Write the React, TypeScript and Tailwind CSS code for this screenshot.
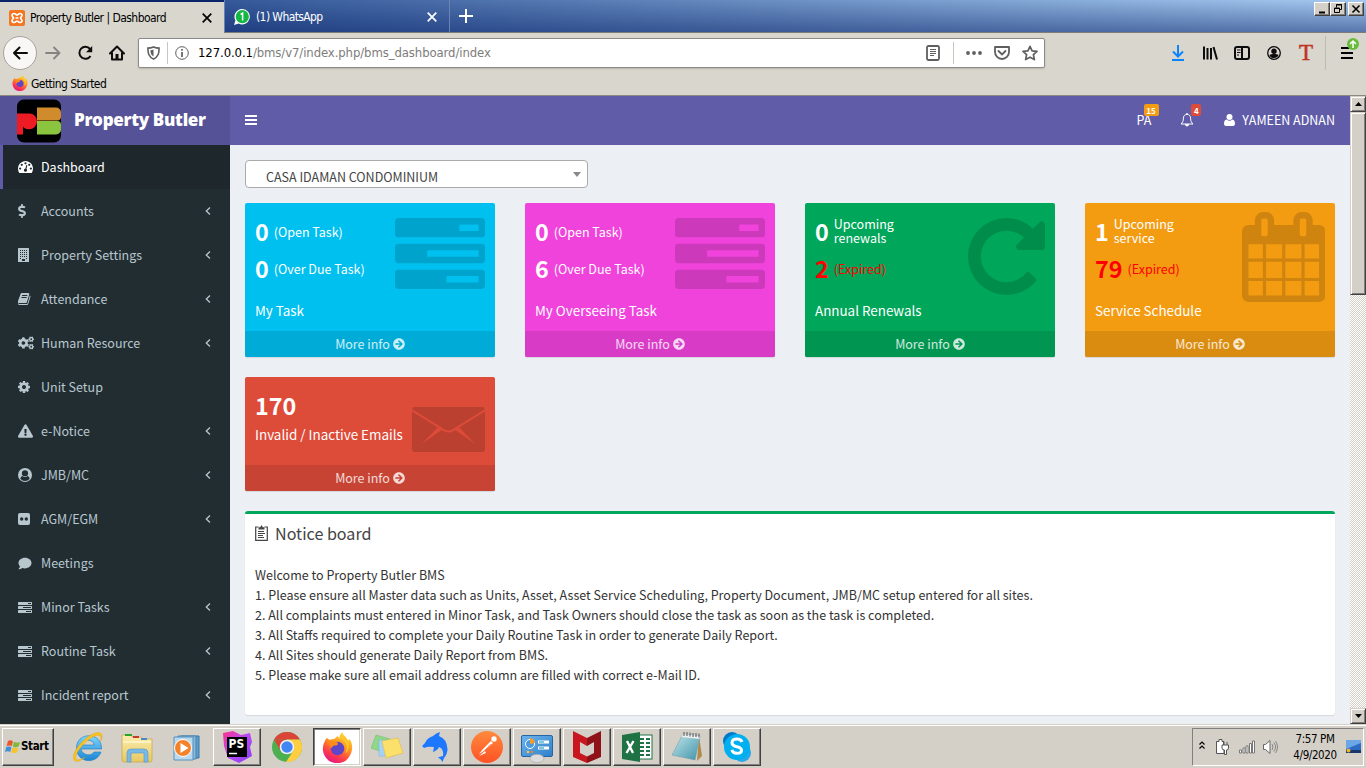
import type { ReactNode } from 'react';
import { FaCogs, FaComment, FaExclamationTriangle, FaArrowCircleRight, FaDollarSign } from 'react-icons/fa';

const TASKS =
  'M1024 1408h640v-128h-640v128zM640 896h1024v-128h-1024v128zM1280 384h384v-128h-384v128zM1792 1216v256q0 26-19 45t-45 19h-1664q-26 0-45-19t-19-45v-256q0-26 19-45t45-19h1664q26 0 45 19t19 45zM1792 704v256q0 26-19 45t-45 19h-1664q-26 0-45-19t-19-45v-256q0-26 19-45t45-19h1664q26 0 45 19t19 45zM1792 192v256q0 26-19 45t-45 19h-1664q-26 0-45-19t-19-45v-256q0-26 19-45t45-19h1664q26 0 45 19t19 45z';
const REPEAT =
  'M1664 256v448q0 26-19 45t-45 19h-448q-42 0-59-40-17-39 14-69l138-138q-148-137-349-137-104 0-198.5 40.5t-163.5 109.5-109.5 163.5-40.5 198.5 40.5 198.5 109.5 163.5 163.5 109.5 198.5 40.5q119 0 225-52t179-147q7-10 23-12 15 0 25 9l137 138q9 8 9.5 20.5t-7.5 22.5q-109 132-264 204.5t-327 72.5q-156 0-298-61t-245-164-164-245-61-298 61-298 164-245 245-164 298-61q147 0 284.5 55.5t244.5 156.5l130-129q29-31 70-14 39 17 39 59z';
const CALENDAR =
  'M192 1664h288v-288h-288v288zm352 0h320v-288h-320v288zm-352-352h288v-320h-288v320zm352 0h320v-320h-320v320zm-352-384h288v-288h-288v288zm736 736h320v-288h-320v288zm-384-736h320v-288h-320v288zm768 736h288v-288h-288v288zm-384-352h320v-320h-320v320zm-352-864v-288q0-13-9.5-22.5t-22.5-9.5h-64q-13 0-22.5 9.5t-9.5 22.5v288q0 13 9.5 22.5t22.5 9.5h64q13 0 22.5-9.5t9.5-22.5zm736 864h288v-320h-288v320zm-384-384h320v-288h-320v288zm384 0h288v-288h-288v288zm32-480v-288q0-13-9.5-22.5t-22.5-9.5h-64q-13 0-22.5 9.5t-9.5 22.5v288q0 13 9.5 22.5t22.5 9.5h64q13 0 22.5-9.5t9.5-22.5zm384-64v1280q0 52-38 90t-90 38h-1408q-52 0-90-38t-38-90v-1280q0-52 38-90t90-38h128v-96q0-66 47-113t113-47h64q66 0 113 47t47 113v96h384v-96q0-66 47-113t113-47h64q66 0 113 47t47 113v96h128q52 0 90 38t38 90z';
const BOOK =
  'M1639 478q40 57 18 129l-275 906q-19 64-76.5 107.5t-122.5 43.5h-923q-77 0-148.5-53.5t-99.5-131.5q-24-67-2-127 0-4 3-27t4-37q1-8-3-21.5t-3-19.5q2-11 8-21t16.5-23.5 16.5-23.5q23-38 45-91.5t30-91.5q3-10 .5-30t-.5-28q3-11 17-28t17-23q21-36 42-92t25-90q1-9-2.5-32t.5-28q4-13 22-30.5t22-22.5q19-26 42.5-84.5t27.5-96.5q1-8-3-25.5t-2-26.5q2-8 9-18t18-23 17-21q8-12 16.5-30.5t15-35 16-36 19.5-32 26.5-23.5 36-11.5 47.5 5.5l-1 3q38-9 51-9h761q74 0 114 56t18 130l-274 906q-36 119-71.5 153.5t-128.5 34.5h-869q-27 0-38 15-11 16-1 43 24 70 144 70h923q29 0 56-15.5t35-41.5l300-987q7-22 5-57 38 15 59 43zm-1064 2q-4 13 2 22.5t20 9.5h608q13 0 25.5-9.5t16.5-22.5l21-64q4-13-2-22.5t-20-9.5h-608q-13 0-25.5 9.5t-16.5 22.5zm-83 256q-4 13 2 22.5t20 9.5h608q13 0 25.5-9.5t16.5-22.5l21-64q4-13-2-22.5t-20-9.5h-608q-13 0-25.5 9.5t-16.5 22.5z';
const COG =
  'M1152 896q0-106-75-181t-181-75-181 75-75 181 75 181 181 75 181-75 75-181zm512-109v222q0 12-8 23t-20 13l-185 28q-19 54-39 91 35 50 107 138 10 12 10 25t-9 23q-27 37-99 108t-94 71q-12 0-26-9l-138-108q-44 23-91 38-16 136-29 186-7 28-36 28h-222q-14 0-24.5-8.5t-11.5-21.5l-28-184q-49-16-90-37l-141 107q-10 9-25 9-14 0-25-11-126-114-165-168-7-10-7-23 0-12 8-23 15-21 51-66.5t54-70.5q-27-50-41-99l-183-27q-13-2-21-12.5t-8-23.5v-222q0-12 8-23t19-13l186-28q14-46 39-92-40-57-107-138-10-12-10-24 0-10 9-23 26-36 98.5-107.5t94.5-71.5q13 0 26 10l138 107q44-23 91-38 16-136 29-186 7-28 36-28h222q14 0 24.5 8.5t11.5 21.5l28 184q49 16 90 37l142-107q9-9 24-9 13 0 25 10 129 119 165 170 7 8 7 22 0 12-8 23-15 21-51 66.5t-54 70.5q26 50 41 98l183 28q13 2 21 12.5t8 23.5z';
const TACHO =
  'M384 1152q0-53-37.5-90.5t-90.5-37.5-90.5 37.5-37.5 90.5 37.5 90.5 90.5 37.5 90.5-37.5 37.5-90.5zm192-448q0-53-37.5-90.5t-90.5-37.5-90.5 37.5-37.5 90.5 37.5 90.5 90.5 37.5 90.5-37.5 37.5-90.5zm428 481l101-382q6-26-7.5-48.5t-38.5-29.5-48 6.5-30 39.5l-101 382q-60 5-107 43.5t-63 98.5q-20 77 20 146t117 89 146-20 89-117q16-60-6-117t-72-91zm660-33q0-53-37.5-90.5t-90.5-37.5-90.5 37.5-37.5 90.5 37.5 90.5 90.5 37.5 90.5-37.5 37.5-90.5zm-640-640q0-53-37.5-90.5t-90.5-37.5-90.5 37.5-37.5 90.5 37.5 90.5 90.5 37.5 90.5-37.5 37.5-90.5zm448 192q0-53-37.5-90.5t-90.5-37.5-90.5 37.5-37.5 90.5 37.5 90.5 90.5 37.5 90.5-37.5 37.5-90.5zm320 448q0 261-141 483-19 29-54 29h-1402q-35 0-54-29-141-221-141-483 0-182 71-348t191-286 286-191 348-71 348 71 286 191 191 286 71 348z';

const Tasks = ({ className }: { className: string }) => (
  <svg viewBox="0 128 1792 1408" className={className} fill="currentColor" preserveAspectRatio="none"><path d={TASKS} /></svg>
);

const BuildingIcon = () => (
  <svg className="w-[11px] h-[14px]" viewBox="0 0 11 14">
    <rect width="11" height="14" rx=".5" fill="currentColor" />
    {[2, 4, 6, 8, 10].map((y) => [2, 4, 6, 8].map((x) => (y === 10 && (x === 4 || x === 6) ? null : <rect key={`${x}-${y}`} x={x} y={y} width="1" height="1" fill="#222d32" />)))}
    <rect x="4" y="11" width="3" height="2" fill="#222d32" />
  </svg>
);

const UserCircle = () => (
  <svg className="w-[14px] h-[14px]" viewBox="0 0 14 14">
    <circle cx="7" cy="7" r="7" fill="currentColor" />
    <path d="M2.300 10.800C2.600 9.200 3.500 8 4.600 7.900a3.400 3.400 0 0 0 4.800 0c1.100.1 2 1.300 2.300 2.900A6 6 0 0 1 7 13a6 6 0 0 1-4.700-2.200z" fill="#222d32" />
    <circle cx="7" cy="5.400" r="3.100" fill="#222d32" />
    <path d="M4.300 5.800a2.700 2.700 0 0 0 5.400 0c0 2-1.200 3.200-2.700 3.200S4.300 7.800 4.300 5.800z" fill="currentColor" />
  </svg>
);

const FlickrIcon = () => (
  <svg className="w-3 h-3" viewBox="0 0 12 12">
    <rect width="12" height="12" rx="2" fill="currentColor" />
    <circle cx="3.700" cy="6" r="1.700" fill="#222d32" />
    <circle cx="8.300" cy="6" r="1.700" fill="#222d32" />
  </svg>
);

const Menu: { label: string; icon: ReactNode; arrow?: boolean }[] = [
  { label: 'Accounts', icon: <FaDollarSign className="w-[8px] h-[14px]" />, arrow: true },
  { label: 'Property Settings', icon: <BuildingIcon />, arrow: true },
  { label: 'Attendance', icon: <svg className="w-[13px] h-[12px]" viewBox="64 128 1664 1536" fill="currentColor"><path d={BOOK} /></svg>, arrow: true },
  { label: 'Human Resource', icon: <FaCogs className="w-[16px] h-[14px]" />, arrow: true },
  { label: 'Unit Setup', icon: <svg className="w-[12px] h-[12px]" viewBox="128 128 1536 1536" fill="currentColor"><path d={COG} /></svg> },
  { label: 'e-Notice', icon: <FaExclamationTriangle className="w-[15px] h-[14px]" />, arrow: true },
  { label: 'JMB/MC', icon: <UserCircle />, arrow: true },
  { label: 'AGM/EGM', icon: <FlickrIcon />, arrow: true },
  { label: 'Meetings', icon: <FaComment className="w-[14px] h-[13px]" /> },
  { label: 'Minor Tasks', icon: <Tasks className="w-[14px] h-[11px]" />, arrow: true },
  { label: 'Routine Task', icon: <Tasks className="w-[14px] h-[11px]" />, arrow: true },
  { label: 'Incident report', icon: <Tasks className="w-[14px] h-[11px]" />, arrow: true },
];

const XIcon = ({ className }: { className: string }) => (
  <svg className={className} viewBox="0 0 10 10" fill="none" stroke="currentColor" strokeWidth="1.700"><path d="M.7.7l8.600 8.600M9.300.7L.7 9.300" /></svg>
);

function TabStrip() {
  return (
    <div className="h-[33px] flex border-b border-[#7e7c78] bg-[linear-gradient(to_bottom,rgba(10,36,106,0),rgba(10,36,106,0.5)),linear-gradient(to_right,#1f4388,#a6caf0)]">
      <div className="w-[224px] h-[33px] border-t-2 border-[#0a246a] bg-[#d9d6ce] flex items-center pl-[9px] shrink-0">
        <svg className="w-4 h-4" viewBox="0 0 16 16"><rect width="16" height="16" rx="2" fill="#f37623" /><path d="M5 3.500c-2 0-2.600 1.800-1.500 3l1 1.500-1 1.500c-1.100 1.200-.5 3 1.500 3 1.500 0 2-1.500 3-1.500s1.500 1.500 3 1.500c2 0 2.600-1.800 1.500-3l-1-1.500 1-1.500c1.100-1.200.5-3-1.500-3-1.500 0-2 1.500-3 1.500s-1.500-1.500-3-1.500zM6.500 8h3" fill="none" stroke="#fff" strokeWidth="1.700" /></svg>
        <span className="ml-[5px] w-[162px] text-[12px] tracking-[-0.54px] text-black whitespace-nowrap">Property Butler | Dashboard</span>
        <XIcon className="w-[10px] h-[10px] ml-[10px] text-black" />
      </div>
      <div className="w-[226px] h-[32px] border-l border-r border-[#6a83b4] flex items-center pl-[9px] pt-[2px] text-white shrink-0">
        <svg className="w-4 h-4" viewBox="0 0 16 16"><path d="M8.300 0a7.700 7.700 0 1 1-3.600 14.600L0 16l1.400-4.600A7.700 7.700 0 0 1 8.300 0z" fill="#fff" /><circle cx="8.300" cy="7.700" r="6.600" fill="#12b843" /><path d="M6.600 5.500l2-1.300v7.200" fill="none" stroke="#fff" strokeWidth="1.500" /></svg>
        <span className="ml-[6px] w-[160px] text-[12px] tracking-[-0.6px] whitespace-nowrap">(1) WhatsApp</span>
        <XIcon className="w-[10px] h-[10px] ml-[11px]" />
      </div>
      <svg className="w-[14px] h-[14px] mt-[9px] ml-[9px]" viewBox="0 0 14 14" stroke="#fff" strokeWidth="2"><path d="M7 0v14M0 7h14" /></svg>
      <div className="ml-auto mr-[2px] mt-[2px] flex h-[14px]">
        <WinBtn><path d="M4 9.500h6" strokeWidth="2" /></WinBtn>
        <WinBtn><path d="M5.500 4.500v-3h5v5H9M5 2h6M3.500 5h5v4.500h-5zM3 5.500h6" fill="none" /></WinBtn>
        <div className="w-[2px]" />
        <WinBtn><path d="M3.500 2.500l7 7M10.500 2.500l-7 7" strokeWidth="1.600" /></WinBtn>
      </div>
    </div>
  );
}

const WinBtn = ({ children }: { children: ReactNode }) => (
  <div className="w-4 h-[14px] bg-[#d4d0c8] border border-t-white border-l-white border-r-[#404040] border-b-[#404040] shadow-[inset_-1px_-1px_0_#808080]">
    <svg className="w-[14px] h-3" viewBox="0 0 14 12" stroke="#000">{children}</svg>
  </div>
);

function Toolbar() {
  return (
    <div className="h-[63px] bg-[#d9d6ce] border-b border-[#8b8880]">
      <div className="h-[40px] flex items-center">
        <div className="ml-[3px] w-[34px] h-[34px] rounded-full bg-[#f8f7f5] border border-[#a5a29c] flex items-center justify-center shrink-0">
          <svg className="w-4 h-4" viewBox="0 0 16 16" fill="none" stroke="#0c0c0d" strokeWidth="2" strokeLinecap="round" strokeLinejoin="round"><path d="M15 8H2M7.500 2.500L2 8l5.500 5.500" /></svg>
        </div>
        <svg className="w-4 h-4 ml-[8px] shrink-0" viewBox="0 0 16 16" fill="none" stroke="#868480" strokeWidth="1.800" strokeLinecap="round" strokeLinejoin="round"><path d="M1 8h13M9 2.500L14.500 8 9 13.500" /></svg>
        <svg className="w-4 h-4 ml-4 shrink-0" viewBox="0 0 16 16" fill="none" stroke="#0c0c0d" strokeWidth="2"><path d="M13.500 11A6 6 0 1 1 13 4" /><path d="M9 7.200h6.200V1z" fill="#0c0c0d" stroke="none" /></svg>
        <svg className="w-4 h-4 ml-4 shrink-0" viewBox="0 0 16 16" fill="none" stroke="#0c0c0d" strokeWidth="2"><path d="M1 8.500L8 1.500l7 7M3 8v6.500h10V8" strokeLinejoin="round" strokeLinecap="round" /><path d="M6.500 14.500V9h3v5.500z" fill="#0c0c0d" stroke="none" /></svg>
        <div className="ml-[13px] w-[907px] h-[30px] bg-white border border-[#8c8a86] rounded-[2px] flex items-center shrink-0 shadow-[0_1px_2px_rgba(0,0,0,0.15)]">
          <svg className="w-[13px] h-[14px] ml-[8px]" viewBox="0 0 13 14"><path d="M6.500.9c2 .9 3.500 1.200 5.600 1.200 0 5-.6 8.500-5.600 11-5-2.500-5.600-6-5.600-11C3 2.100 4.500 1.800 6.500.9z" fill="none" stroke="#5f5f60" strokeWidth="1.600" /><path d="M6.500 3.500v7C4 9 3.500 7 3.400 4.200c1.100 0 2.100-.3 3.100-.7z" fill="#5f5f60" /></svg>
          <div className="w-px h-[22px] bg-[#c9c6be] ml-[7px]" />
          <svg className="w-[14px] h-[14px] ml-[7px]" viewBox="0 0 14 14" fill="none" stroke="#5f5f60"><circle cx="7" cy="7" r="6.300" /><path d="M7 6v5M7 3v1.700" strokeWidth="1.700" /></svg>
          <span className="ml-[9px] text-[13px] text-[#7d7c7a] whitespace-nowrap tracking-[-0.1px]"><span className="text-black">127.0.0.1</span>/bms/v7/index.php/bms_dashboard/index</span>
          <svg className="w-[14px] h-4 ml-auto" viewBox="0 0 14 16" fill="none" stroke="#5f5f60"><rect x="1" y="1" width="12" height="14" rx="1.500" strokeWidth="1.800" /><path d="M4 4.500h6M4 6.500h6M4 8.500h6M4 10.500h4" /></svg>
          <div className="w-px h-[22px] bg-[#c9c6be] ml-[13px]" />
          <svg className="w-4 h-4 ml-[12px]" viewBox="0 0 16 16" fill="#5f5f60"><circle cx="2" cy="8" r="1.900" /><circle cx="8" cy="8" r="1.900" /><circle cx="14" cy="8" r="1.900" /></svg>
          <svg className="w-4 h-4 ml-3" viewBox="0 0 16 16" fill="none" stroke="#5f5f60" strokeWidth="1.800"><path d="M1 2h14v5a7 7 0 0 1-14 0z" strokeLinejoin="round" /><path d="M4.500 6L8 9.500 11.500 6" strokeLinecap="round" /></svg>
          <svg className="w-4 h-4 ml-3 mr-[6px]" viewBox="0 0 16 16" fill="none" stroke="#5f5f60" strokeWidth="1.700"><path d="M8 1.300l2.100 4.500 4.900.6-3.600 3.300 1 4.900L8 12.200l-4.400 2.400 1-4.900L1 6.400l4.900-.6z" strokeLinejoin="round" /></svg>
        </div>
        <svg className="w-[14px] h-4 ml-[126px] shrink-0" viewBox="0 0 14 16" fill="none" stroke="#0a84ff" strokeWidth="2"><path d="M7 0v11M2 6.500L7 11.500l5-5M1 15h12" /></svg>
        <svg className="w-4 h-4 ml-[17px] shrink-0" viewBox="0 0 16 16" stroke="#0c0c0d" strokeWidth="2"><path d="M2 1.500v13M5.500 3v11.500M9 3v11.500M11.500 2l3.500 12.500" /></svg>
        <svg className="w-4 h-4 ml-4 shrink-0" viewBox="0 0 16 16" fill="none" stroke="#0c0c0d" strokeWidth="2"><rect x="1" y="2" width="14" height="12" rx="2" /><path d="M8 2v12" /><path d="M3 5h3.500M3 7.500h3.500M3 10h2" strokeWidth="1" /></svg>
        <svg className="w-[14px] h-[14px] ml-[17px] shrink-0" viewBox="0 0 14 14"><circle cx="7" cy="7" r="6.300" fill="none" stroke="#0c0c0d" strokeWidth="1.300" /><circle cx="7" cy="5.200" r="2.700" fill="#0c0c0d" /><path d="M2.500 9C4 7.800 10 7.800 11.500 9 11 11 9 12 7 12S3 11 2.500 9z" fill="#0c0c0d" /></svg>
        <span className="ml-[17px] w-[16px] text-center font-['Liberation_Serif',serif] text-[23px] leading-[20px] [-webkit-text-stroke:0.5px_#c0321f] text-[#c0321f]">T</span>
        <div className="w-px h-[34px] bg-[#bebbb3] ml-[11px]" />
        <div className="relative ml-[15px] w-[12px] h-[12px] flex flex-col justify-between">
          <div className="h-[2px] bg-black" /><div className="h-[2px] bg-black" /><div className="h-[2px] bg-black" />
          <svg className="absolute left-[6px] -top-[9px] w-3 h-3" viewBox="0 0 12 12"><circle cx="6" cy="6" r="6" fill="#67bd3b" /><path d="M6 10V3M3 6l3-3 3 3" fill="none" stroke="#fff" strokeWidth="1.500" /></svg>
        </div>
      </div>
      <div className="h-[22px] flex items-center pl-3">
        <FirefoxLogo className="w-[16px] h-[16px] -mt-[2px]" />
        <span className="ml-[3px] text-[12px] text-black tracking-[-0.55px]">Getting Started</span>
      </div>
    </div>
  );
}

const FirefoxLogo = ({ className }: { className: string }) => (
  <svg className={className} viewBox="0 0 32 32">
    <defs>
      <linearGradient id="ffx" x1=".8" y1="0" x2=".3" y2="1"><stop offset="0" stopColor="#ffe43d" /><stop offset=".4" stopColor="#ff9a1f" /><stop offset=".75" stopColor="#ff3b4b" /><stop offset="1" stopColor="#e31587" /></linearGradient>
    </defs>
    <path d="M5 6c1 1 2 2 3 2l5-1 3-3c1 1 2 3 2 3 0-3 1-5 3-7 1 4 4 5 6 9 1-1 1-2 1-2 4 4 4 12 1 17a14.800 14.800 0 0 1-26.500 0C-.5 18 1 11 5 6z" fill="url(#ffx)" />
    <circle cx="16" cy="17" r="7" fill="#5f45c8" />
    <path d="M5 8c3 2 6 1 9 2 4 1 3 4-1 4-2 0-2 2-4 3 0-4-3-5-4-9z" fill="#ff8a16" />
    <path d="M17 6c7 1 11 9 7 16 5-3 5-13-1-18z" fill="#ffc927" />
  </svg>
);

const BellOutline = () => (
  <svg className="w-[14px] h-[14px]" viewBox="0 0 14 14" fill="none" stroke="#fff">
    <path d="M7 1.400C4.600 1.400 3.400 3.200 3.400 5.200c0 3-.9 4.400-2.400 5.800h12c-1.500-1.400-2.400-2.800-2.400-5.800 0-2-1.200-3.800-3.600-3.800z" strokeLinejoin="round" />
    <path d="M7 0v1.500" strokeWidth="1.400" />
    <path d="M5.500 11.500a1.500 1.500 0 0 0 3 0z" fill="#fff" />
  </svg>
);

function Header() {
  return (
    <div className="h-[49px] flex bg-[#605ca8] text-white">
      <div className="w-[230px] bg-[#565297] flex items-center pl-[17px]">
        <svg className="w-[44px] h-[44px]" viewBox="0 0 44 44">
          <rect y=".5" width="44" height="43" rx="7" fill="#000" />
          <path d="M20 8.500h19a5 5 0 0 1 5 5v4a4 4 0 0 1-4 4H20z" fill="#cf8b2c" />
          <path d="M20 22h20a4 4 0 0 1 4 4v4.500a5 5 0 0 1-5 5H20z" fill="#8bc540" />
          <path d="M0 14.500h12.500a7.500 7.500 0 0 1 7.500 7.500v.5a7.800 7.800 0 0 1-7.800 7.800Q8 30.500 6 27.500v8H0z" fill="#ed1c24" />
        </svg>
        <span className="ml-[13px] -mt-[1px] font-['Open_Sans',sans-serif] font-extrabold text-[17px] leading-[24px] tracking-[-0.3px] whitespace-nowrap">Property Butler</span>
      </div>
      <div className="flex-1 flex items-center pl-[15px] pr-[15px]">
        <div className="w-[12px] h-[10px] flex flex-col justify-between -mt-[1px]"><i className="h-[2px] bg-white" /><i className="h-[2px] bg-white" /><i className="h-[2px] bg-white" /></div>
        <div className="ml-auto relative -mt-[2px] text-[12.500px] leading-5">
          PA
          <span className="absolute left-[7px] -top-[6px] h-[12px] w-[15px] rounded-[2px] bg-[#f39c12] text-[8px] leading-[13px] font-bold text-center">15</span>
        </div>
        <div className="relative ml-[29px] w-[14px] mr-[30px] -mt-[1px]">
          <BellOutline />
          <span className="absolute left-[11px] -top-[9px] h-[12px] w-[10px] rounded-[2px] bg-[#dd4b39] text-[8px] leading-[13px] font-bold text-center">4</span>
        </div>
        <svg className="w-[11px] h-[12px] -mt-[1px]" viewBox="0 0 11 12" fill="#fff"><circle cx="5.500" cy="3" r="3" /><path d="M2.700 5.500a4 4 0 0 0 5.600 0C10.500 5.800 11 8 11 9.800c0 1.300-.8 2.200-2 2.200H2c-1.200 0-2-.9-2-2.200C0 8 .5 5.800 2.700 5.500z" /></svg>
        <span className="ml-[7px] -mt-[2px] text-[12.500px] leading-5 whitespace-nowrap">YAMEEN ADNAN</span>
      </div>
    </div>
  );
}

function Sidebar() {
  return (
    <div className="w-[230px] bg-[#222d32] text-[#b8c7ce] text-[12.500px] leading-5 overflow-hidden">
      <div className="h-[44px] bg-[#1e282c] border-l-[3px] border-[#605ca8] text-white flex items-center pl-[15px]">
        <div className="w-[23px]"><svg className="w-[15px] h-[12px]" viewBox="0 256 1792 1408" fill="currentColor"><path d={TACHO} /></svg></div>Dashboard
      </div>
      {Menu.map((m) => (
        <div key={m.label} className="h-[44px] flex items-center pl-[18px] pr-[19px]">
          <div className="w-[23px]">{m.icon}</div>
          <span>{m.label}</span>
          {m.arrow && <svg className="ml-auto w-[6px] h-[8px]" viewBox="0 0 6 8" fill="none" stroke="currentColor" strokeWidth="1.300"><path d="M5 .6L1.300 4 5 7.400" /></svg>}
        </div>
      ))}
    </div>
  );
}

function MoreInfo({ className }: { className: string }) {
  return (
    <div className={`h-[26px] flex items-center justify-center gap-[3px] text-white/80 text-[12.500px] leading-5 ${className}`}>
      More info <FaArrowCircleRight className="w-3 h-3" />
    </div>
  );
}

interface CardProps { bg: string; foot: string; a: string; aText: ReactNode; b: string; bText: string; red?: boolean; label: string; icon: ReactNode }

function Card({ bg, foot, a, aText, b, bText, red, label, icon }: CardProps) {
  return (
    <div className={`relative h-[154px] rounded-[2px] overflow-hidden text-white shadow-[0_1px_1px_rgba(0,0,0,0.1)] ${bg}`}>
      {icon}
      <div className="relative h-[128px] pl-[10px] pt-[10px]">
        <div className="h-[37px] flex items-center gap-[5px] text-[12.500px]">
          <b className="text-[23.300px] leading-[37px]">{a}</b>{aText}
        </div>
        <div className={`h-[37px] flex items-center gap-[5px] text-[12.500px] ${red ? 'text-[#ff0000]' : ''}`}>
          <b className="text-[23.300px] leading-[37px]">{b}</b><span className="pt-[2px]">{bText}</span>
        </div>
        <div className="mt-[13px] text-[13.400px] leading-5">{label}</div>
      </div>
      <MoreInfo className={foot} />
    </div>
  );
}

const OpenTask = <span className="pt-[1px] leading-[14px]">(Open Task)</span>;
const upcoming = (what: string) => <span className="-mt-[2px] leading-[14px]">Upcoming<br />{what}</span>;

const NOTICES = [
  'Welcome to Property Butler BMS',
  '1. Please ensure all Master data such as Units, Asset, Asset Service Scheduling, Property Document, JMB/MC setup entered for all sites.',
  '2. All complaints must entered in Minor Task, and Task Owners should close the task as soon as the task is completed.',
  '3. All Staffs required to complete your Daily Routine Task in order to generate Daily Report.',
  '4. All Sites should generate Daily Report from BMS.',
  '5. Please make sure all email address column are filled with correct e-Mail ID.',
];

function Main() {
  return (
    <div className="flex-1 bg-[#ecf0f5] pl-[15px] pr-[15px] pt-[15px] overflow-hidden">
      <div className="w-[343px] h-[28px] bg-white border border-[#aaa] rounded-[4px] flex items-start pl-5 pr-[6px] text-[12.500px] leading-5 text-[#444]">
        <span className="pt-[6px]">CASA IDAMAN CONDOMINIUM</span>
        <svg className="ml-auto mt-[11px] w-2 h-[5px]" viewBox="0 0 8 5"><path d="M0 0h8L4 5z" fill="#888" /></svg>
      </div>
      <div className="mt-[15px] grid grid-cols-4 gap-x-[30px] gap-y-5">
        <Card bg="bg-[#00c0ef]" foot="bg-[#00acd7]" a="0" aText={OpenTask} b="0" bText="(Over Due Task)" label="My Task" icon={<Tasks className="absolute left-[150px] top-[15px] w-[90px] h-[71px] text-black/15" />} />
        <Card bg="bg-[#f043dc]" foot="bg-[#d83cc6]" a="0" aText={OpenTask} b="6" bText="(Over Due Task)" label="My Overseeing Task" icon={<Tasks className="absolute left-[150px] top-[15px] w-[90px] h-[71px] text-black/15" />} />
        <Card bg="bg-[#00a65a]" foot="bg-[#009551]" a="0" aText={upcoming('renewals')} b="2" bText="(Expired)" red label="Annual Renewals" icon={<svg className="absolute left-[163px] top-[15px] w-[77px] h-[77px] text-black/15" viewBox="128 128 1536 1536" fill="currentColor"><path d={REPEAT} /></svg>} />
        <Card bg="bg-[#f39c12]" foot="bg-[#da8c10]" a="1" aText={upcoming('service')} b="79" bText="(Expired)" red label="Service Schedule" icon={<svg className="absolute left-[156.500px] top-[9px] w-[83.500px] h-[90px] text-black/15" viewBox="64 0 1664 1792" fill="currentColor"><path d={CALENDAR} /></svg>} />
        <div className="relative h-[114px] rounded-[2px] overflow-hidden text-white bg-[#dd4b39] shadow-[0_1px_1px_rgba(0,0,0,0.1)]">
          <svg className="absolute left-[167px] top-[30px] w-[73px] h-[45px]" viewBox="0 0 219 135">
            <path d="M4 0H215L219 9V125Q219 135 209 135H10Q0 135 0 125V9z" fill="#bc4030" />
            <path d="M0 10L86 63Q110 84 133 63L219 10" fill="none" stroke="#dd4b39" strokeWidth="6" />
            <path d="M78 61L29 111 90 68zM141 61L190 111 129 68z" fill="#dd4b39" />
          </svg>
          <div className="relative h-[88px] pl-[10px] pt-[9px]">
            <div className="h-[38px] leading-[38px] text-[23.300px] font-bold">170</div>
            <div className="text-[13.450px] leading-5">Invalid / Inactive Emails</div>
          </div>
          <MoreInfo className="bg-[#c74333]" />
        </div>
      </div>
      <div className="mt-5 h-[204px] bg-white border-t-[3px] border-[#00a65a] rounded-[3px] shadow-[0_1px_1px_rgba(0,0,0,0.1)] px-[10px] pt-[9px]">
        <div className="flex items-center h-5 text-[16.100px] leading-5 text-[#444]">
          <svg className="w-[13px] h-4" viewBox="0 0 13 16" fill="none" stroke="#444"><path d="M3.500 2H.7v13.300h11.600V2H9.500" strokeWidth="1.200" /><path d="M3.500 4.500V2.300h1.700L6.500 0l1.300 2.300h1.700v2.200z" fill="#444" stroke="none" /><path d="M3 6.500h6M3 8.500h7M3 10.500h5M3 12.500h6" /></svg>
          <span className="ml-[7px]">Notice board</span>
        </div>
        <div className="mt-[22px] text-[12.530px] leading-5 text-[#333] whitespace-nowrap">
          {NOTICES.map((n) => <p key={n}>{n}</p>)}
        </div>
      </div>
    </div>
  );
}

function ScrollBar() {
  const raised = 'bg-[#d4d0c8] border border-t-[#d4d0c8] border-l-[#d4d0c8] border-r-[#404040] border-b-[#404040] shadow-[inset_1px_1px_0_#fff,inset_-1px_-1px_0_#808080]';
  return (
    <div className="w-4 shrink-0 flex flex-col bg-[repeating-conic-gradient(#d4d0c8_0_25%,#ffffff_0_50%)] bg-[length:2px_2px]">
      <div className={`h-4 flex items-center justify-center ${raised}`}><svg className="w-[7px] h-1" viewBox="0 0 7 4"><path d="M0 4h7L3.500 0z" /></svg></div>
      <div className={`h-[183px] ${raised}`} />
      <div className={`mt-auto h-4 flex items-center justify-center ${raised}`}><svg className="w-[7px] h-1" viewBox="0 0 7 4"><path d="M0 0h7L3.500 4z" /></svg></div>
    </div>
  );
}

const TaskButton = ({ children, active }: { children: ReactNode; active?: boolean }) => (
  <div className={`w-12 h-[38px] mr-[2px] flex items-center justify-center shrink-0 border ${active ? 'bg-white border-t-[#404040] border-l-[#404040] border-r-white border-b-white shadow-[inset_1px_1px_0_#808080,inset_-1px_-1px_0_#d4d0c8]' : 'border-t-white border-l-white border-r-[#404040] border-b-[#404040] shadow-[inset_-1px_-1px_0_#808080]'}`}>{children}</div>
);

function Taskbar() {
  const ic = 'w-8 h-8 shrink-0';
  return (
    <div className="h-[44px] bg-[#d4d0c8] border-t border-[#d4d0c8] shadow-[inset_0_1px_0_#fff] flex items-start pt-[3px] pl-[2px]">
      <svg width="0" height="0" className="absolute">
        <defs>
          <linearGradient id="ie" x1="0" y1="0" x2="0" y2="1"><stop offset="0" stopColor="#7fd4fb" /><stop offset="1" stopColor="#1a86d6" /></linearGradient>
          <linearGradient id="ps" x1="0" y1="0" x2="1" y2="1"><stop offset="0" stopColor="#ff318c" /><stop offset=".5" stopColor="#b74af7" /><stop offset="1" stopColor="#8a3df0" /></linearGradient>
          <linearGradient id="pm" x1="0" y1="0" x2="0" y2="1"><stop offset="0" stopColor="#ff8a3c" /><stop offset="1" stopColor="#ff5226" /></linearGradient>
          <linearGradient id="cp" x1="0" y1="0" x2="1" y2="1"><stop offset="0" stopColor="#6db4ec" /><stop offset="1" stopColor="#2f7fca" /></linearGradient>
          <linearGradient id="np" x1="0" y1="0" x2="1" y2="1"><stop offset="0" stopColor="#c5e8ee" /><stop offset="1" stopColor="#3f93a8" /></linearGradient>
          <linearGradient id="fold" x1="0" y1="0" x2="0" y2="1"><stop offset="0" stopColor="#fbeeb0" /><stop offset="1" stopColor="#e8c860" /></linearGradient>
        </defs>
      </svg>
      <div className="w-[52px] h-[38px] flex items-center pl-[2px] text-black text-[11.500px] font-bold border border-t-white border-l-white border-r-[#404040] border-b-[#404040] shadow-[inset_-1px_-1px_0_#808080] shrink-0">
        <svg className="w-4 h-[14px] shrink-0" viewBox="0 0 16 14"><path d="M3 1q2.500-1.500 5 .3L6.800 6Q4.500 4.800 1.600 6z" fill="#e8582c" /><path d="M9 1.700q2.500 1.500 6 .2L13.600 6.600Q10.500 8 7.800 6.400z" fill="#7fb93c" /><path d="M1.300 7Q4 5.800 6.500 7L5.200 12Q3 10.700 0 12z" fill="#3f8fd9" /><path d="M7.500 7.400q2.800 1.500 5.800.2L12 12.500q-3 1.200-5.800-.3z" fill="#f8c42a" /></svg>
        <span className="tracking-[-0.35px]">Start</span>
      </div>
      <div className="flex items-center h-[38px] ml-[18px]">
        <svg className={ic} viewBox="0 0 32 32"><path d="M9 18h20.500c1-17-25-18-25-1 0 15 20 17 24.500 4h-7c-3 5-12 3-13-3zm.2-4c1-6.500 12-6.500 13 0z" fill="url(#ie)" stroke="#1d78c0" strokeWidth=".6" /><path d="M2 29C-2 22 14 3 26 1.500c5 0 5 5 2.500 9 1.500-5 0-7-4-6C15 7 2 22 4 28c1 2 6 0 9-2-4 4-9 6-11 3z" fill="#f9c21c" stroke="#e0a010" strokeWidth=".4" /></svg>
        <svg className={`${ic} ml-[17px]`} viewBox="0 0 32 32"><path d="M1 4h9l1 2h9l1 2h10v21q0 2-2 2H3q-2 0-2-2z" fill="url(#fold)" stroke="#c7a548" strokeWidth=".7" /><path d="M4 3h7v2H4z" fill="#29a329" /><path d="M12 5h6v2h-6z" fill="#c8382c" /><path d="M20 7h6v2h-6z" fill="#4a86c8" /><path d="M2 11h28" stroke="#fff7cc" strokeWidth="1.500" /><path d="M6 31V22q0-4 4-4h13q4 0 4 4v9h-4v-9H10v9z" fill="#79b9e6" stroke="#4f94cc" strokeWidth=".6" /></svg>
        <svg className={`${ic} ml-[20px]`} viewBox="0 0 32 32"><path d="M8 5h18v22H8z" fill="#5f9dcb" stroke="#3777a8" /><path d="M5 5h18v23H5z" fill="#86b9dd" stroke="#4a84b0" /><path d="M1 6h19v23H1z" fill="#b9d9ee" stroke="#5790ba" /><circle cx="10" cy="17" r="8.500" fill="#f4822a" stroke="#fff" /><path d="M7.500 12l8 5-8 5z" fill="#fff" /></svg>
      </div>
      <div className="w-[8px] shrink-0" />
      <TaskButton><svg className={ic} viewBox="0 0 32 32"><path d="M2 2l10-2 8 4 9-2 2 9-2 5 2 9-13 7-11-5-4-12z" fill="url(#ps)" /><rect x="6" y="6" width="20" height="20" fill="#000" /><text x="7.500" y="17" fontSize="12" fontWeight="bold" fill="#fff">PS</text><path d="M8 22.500h8" stroke="#fff" strokeWidth="1.500" /></svg></TaskButton>
      <div className="w-12 mr-[2px] h-[38px] flex items-center justify-center shrink-0">
        <svg className={ic} viewBox="0 0 32 32"><circle cx="16" cy="16" r="15" fill="#4caf50" /><path d="M3 8.500A15 15 0 0 1 29 8.500H16z" fill="#db4437" /><path d="M29 8.500A15 15 0 0 1 15 31L22.500 19.500 16 8.500z" fill="#ffcd40" /><path d="M3 8.500L9.500 19.700 16 8.500z" fill="#db4437" /><circle cx="16" cy="16" r="7.300" fill="#f1f1f1" /><circle cx="16" cy="16" r="5.700" fill="#4285f4" /></svg>
      </div>
      <TaskButton active><FirefoxLogo className="w-[31px] h-[31px] shrink-0" /></TaskButton>
      <TaskButton><svg className={ic} viewBox="0 0 32 32"><path d="M5 4l14 4-5 14L0 17z" fill="#8fd889" stroke="#6cba68" strokeWidth=".5" /><path d="M8 9h15v16H8z" fill="#a6d3f5" stroke="#7ab3e0" strokeWidth=".5" /><path d="M11 10l16-3 5 15-17 5z" fill="#fbe16b" stroke="#ddbd3a" strokeWidth=".6" /></svg></TaskButton>
      <TaskButton><svg className={ic} viewBox="0 0 32 32"><path d="M12 5q3-3 7-4l-1 4q8 3 8.500 13 0 5-3.500 9l-1.500 4q-1-3-4.500-4.500 3-1.500 5-1.500 1-7-4-9-1 3-6 5l1-5q-6-1-10 1l-2-2 3-3q2-5 8-7z" fill="#1e78ff" /></svg></TaskButton>
      <TaskButton><svg className={ic} viewBox="0 0 32 32"><circle cx="16" cy="16" r="16" fill="url(#pm)" /><circle cx="23" cy="8" r="2.700" fill="#fff" /><path d="M20 10l2 2-9 8-5 3 4-5zM14 20l1 2-7 3" fill="#fff" /><path d="M20 13l-9 9" stroke="#ff6c37" strokeWidth=".7" /></svg></TaskButton>
      <TaskButton><svg className={ic} viewBox="0 0 32 32"><rect x=".5" y="4.500" width="31" height="21" rx="1.500" fill="url(#cp)" stroke="#2466a8" /><circle cx="9" cy="13" r="4.500" fill="#4b9be0" stroke="#fff" /><path d="M9 13V7a6 6 0 0 1 5 5z" fill="#f49b28" /><path d="M17 11h11M17 17h11" stroke="#fff" strokeWidth="3" /><path d="M18 11h5M18 17h5" stroke="#53b5cf" strokeWidth="1.500" /><circle cx="7" cy="21" r="1.300" fill="#ffc247" /><circle cx="11" cy="21" r="1.300" fill="#f4822a" /><ellipse cx="16" cy="27.500" rx="7" ry="4.200" fill="#dcdcdc" stroke="#999" strokeWidth=".5" /></svg></TaskButton>
      <TaskButton><svg className={ic} viewBox="0 0 32 32"><path d="M2 0l14 7v8l-7-4v11l7 3.500V32L2 26z" fill="#c8171e" /><path d="M30 0L16 7v8l7-4v11l-7 3.500V32l14-6z" fill="#8e1217" /></svg></TaskButton>
      <TaskButton><svg className={ic} viewBox="0 0 32 32"><rect x="15" y="4" width="16" height="24" fill="#fff" stroke="#1f7244" /><path d="M19 8h4M25 8h4M19 12h4M25 12h4M19 16h4M25 16h4M19 20h4M25 20h4M19 24h4M25 24h4" stroke="#1f7244" strokeWidth="2" /><path d="M1 4l18-3v30L1 28z" fill="#1f7244" /><path d="M6 10l6 12M12.500 10L5.500 22" stroke="#fff" strokeWidth="2.400" /></svg></TaskButton>
      <TaskButton><svg className={ic} viewBox="0 0 32 32"><path d="M28 5l3 20-5 5z" fill="#b08a4a" /><path d="M12 3l17 2-5 24-23-5z" fill="url(#np)" stroke="#6c98a2" strokeWidth=".5" /><path d="M12 3l17 2-.6 3L10.500 6z" fill="#eee" /><path d="M13 1v4M16 1v4M19 1.500v4M22 2v4M25 2v4M28 2.500v4" stroke="#555" /></svg></TaskButton>
      <TaskButton><svg className={ic} viewBox="0 0 32 32"><circle cx="11" cy="10" r="9" fill="#0078ca" /><circle cx="21" cy="22" r="9" fill="#28a8ea" /><circle cx="16" cy="16" r="13" fill="#00aff0" /><path d="M21 11q-1-3-5-3-5 0-5 3.800 0 3 5 4 4.500 1 4.500 3.500 0 3-4.500 3-4.500 0-5-3.500" fill="none" stroke="#fff" strokeWidth="3" /></svg></TaskButton>
      <div className="ml-auto mr-[2px] w-[172px] h-[38px] shrink-0 border border-t-[#808080] border-l-[#808080] border-r-white border-b-white flex items-center pl-[6px] text-black">
        <svg className="w-[6px] h-[8px] -mt-[4px]" viewBox="0 0 6 8" fill="none" stroke="#000" strokeWidth="1.200"><path d="M.5 3.500L3 1l2.500 2.500M.5 7.500L3 5l2.500 2.500" /></svg>
        <svg className="w-4 h-4 ml-[10px]" viewBox="0 0 16 16" fill="#fff" stroke="#555"><path d="M3 2.500h1v-2h3v2h2v12H1.500v-12z" /><path d="M7 6h6.500v3q0 2-2 2v4.500h-2V11Q7 11 7 9z" /><path d="M8.500 6V3M12 6V3" /></svg>
        <svg className="w-4 h-4 ml-[8px]" viewBox="0 0 16 16" fill="#fff" stroke="#777"><path d="M.5 11h2v3h-2zM4 9h2v5H4zM7 7h2v7H7zM10.500 4.500h2V14h-2zM13.500 2h2v12h-2z" /></svg>
        <svg className="w-[15px] h-4 ml-[8px]" viewBox="0 0 15 16" fill="#fff" stroke="#666"><path d="M.5 5.500h2L7 1.500v13l-4.500-4h-2z" /><path d="M9 5q2 3 0 6M10.800 3.500q3.500 4.500 0 9M12.500 2q4 6 0 12" fill="none" stroke="#888" /></svg>
        <div className="ml-[14px] w-[46px] text-center text-[11.500px] leading-4 tracking-[-0.4px] whitespace-nowrap flex flex-col items-center"><span>7:57 PM</span><span>4/9/2020</span></div>
        <svg className="w-[15px] h-[14px] ml-[8px]" viewBox="0 0 15 14"><rect width="15" height="12" fill="#2d6bc4" /><path d="M0 0h15v3L0 9z" fill="#6ba7e6" /><rect y="10" width="15" height="3" fill="#17376b" /><circle cx="2.500" cy="10.500" r="2" fill="#e9b52a" /></svg>
      </div>
    </div>
  );
}

export default function App() {
  return (
    <div className="w-[1366px] h-[768px] overflow-hidden flex flex-col font-['DejaVu_Sans_Condensed','DejaVu_Sans',sans-serif]">
      <TabStrip />
      <Toolbar />
      <div className="h-[628px] flex font-['Noto_Sans_CJK_SC',sans-serif]">
        <div className="w-[1350px] flex flex-col">
          <Header />
          <div className="flex-1 min-h-0 flex"><Sidebar /><Main /></div>
        </div>
        <ScrollBar />
      </div>
      <Taskbar />
    </div>
  );
}
